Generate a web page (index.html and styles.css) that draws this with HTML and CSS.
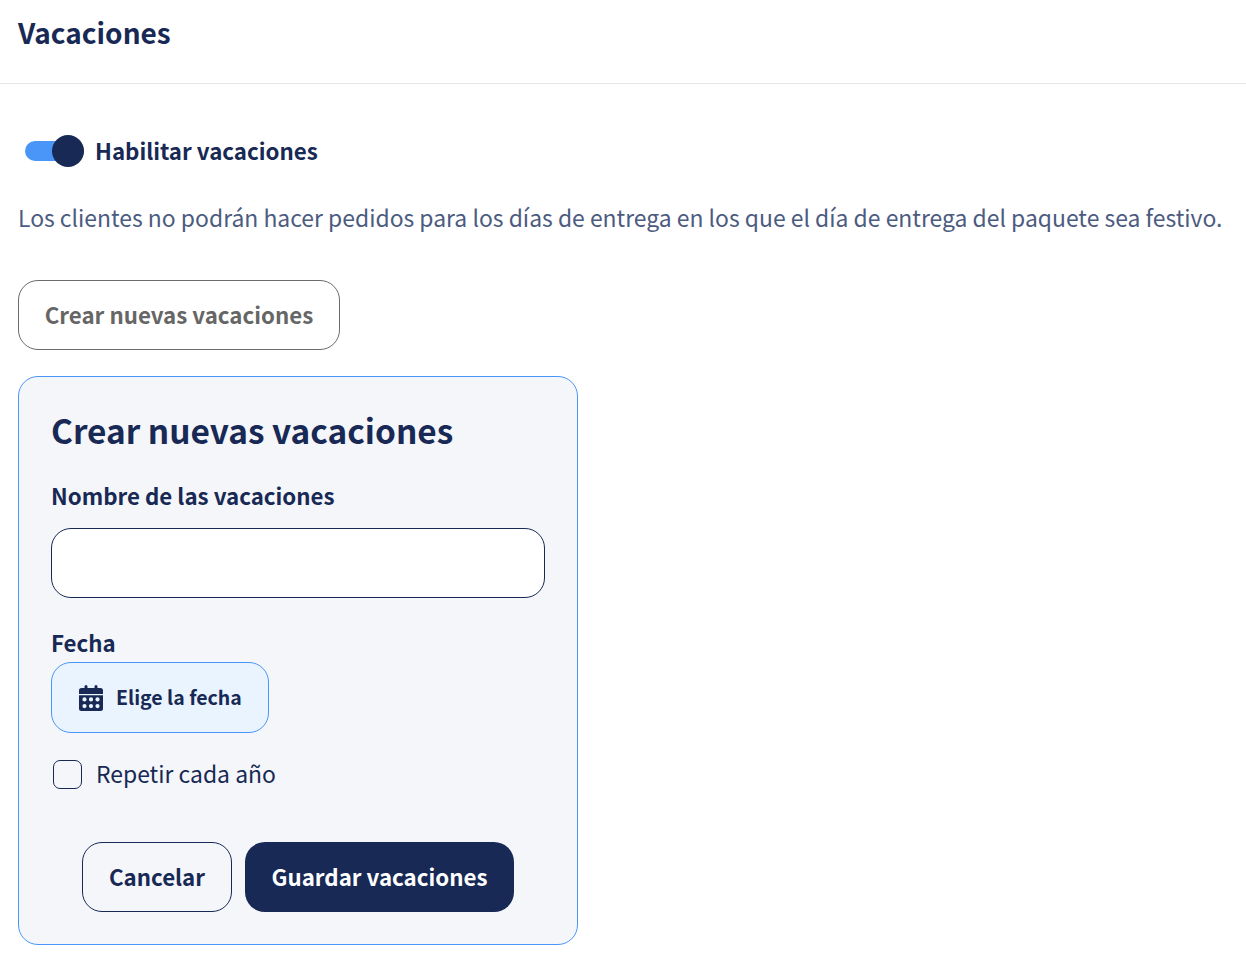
FILE: index.html
```html
<!doctype html>
<html lang="es">
  <head>
    <meta charset="UTF-8" />
    <meta name="viewport" content="width=device-width, initial-scale=1.0" />
    <title>Vacaciones</title>
    <link rel="stylesheet" href="styles.css">
  </head>
  <body>
    <header class="page-header">
      <h1>Vacaciones</h1>
    </header>

    <main class="content">
      <label class="toggle-row">
        <span class="toggle"><span class="toggle-knob"></span></span>
        <span class="toggle-label">Habilitar vacaciones</span>
      </label>

      <p class="description">Los clientes no podrán hacer pedidos para los días de entrega en los que el día de entrega del paquete sea festivo.</p>

      <button class="btn btn-disabled" type="button">Crear nuevas vacaciones</button>

      <form class="holiday-card">
        <h2>Crear nuevas vacaciones</h2>

        <label class="field-label" for="holiday-name">Nombre de las vacaciones</label>
        <input class="text-input" id="holiday-name" type="text">

        <div class="field-label date-label">Fecha</div>
        <button class="date-btn" type="button">
          <svg class="calendar-icon" viewBox="0 0 24 26" aria-hidden="true">
            <path d="M5.500 1.500a1.500 1.500 0 0 1 3 0V3h7V1.500a1.500 1.500 0 0 1 3 0V3h3A2.500 2.500 0 0 1 24 5.500V9H0V5.500A2.500 2.500 0 0 1 2.500 3h3z"/>
            <path fill-rule="evenodd" d="M0 10.200h24v13.300a2.500 2.500 0 0 1-2.500 2.500h-19A2.500 2.500 0 0 1 0 23.500zM5.500 12.300a2.100 2.100 0 1 0 0 4.200 2.100 2.100 0 0 0 0-4.200zm6.500 0a2.100 2.100 0 1 0 0 4.200 2.100 2.100 0 0 0 0-4.200zm6.500 0a2.100 2.100 0 1 0 0 4.200 2.100 2.100 0 0 0 0-4.200zM5.500 19a2.100 2.100 0 1 0 0 4.200 2.100 2.100 0 0 0 0-4.200zm6.500 0a2.100 2.100 0 1 0 0 4.200 2.100 2.100 0 0 0 0-4.200zm6.500 0a2.100 2.100 0 1 0 0 4.200 2.100 2.100 0 0 0 0-4.200z"/>
          </svg>
          <span class="date-text">Elige la fecha</span>
        </button>

        <label class="check-row">
          <input class="checkbox" type="checkbox">
          <span class="check-text">Repetir cada año</span>
        </label>

        <div class="card-actions">
          <button class="btn btn-outline" type="button">Cancelar</button>
          <button class="btn btn-primary" type="button">Guardar vacaciones</button>
        </div>
      </form>
    </main>
  </body>
</html>
```

FILE: styles.css
```css
body {
  margin: 0;
  background: #fff;
  color: #172954;
  font-family: "Noto Sans CJK SC", "Noto Sans", sans-serif;
}

.page-header {
  height: 83px;
  border-bottom: 1px solid #e4e6e9;
  padding: 0 18px;
  box-sizing: content-box;
}

.page-header h1 {
  margin: 0;
  padding-top: 13px;
  font-size: 28px;
  line-height: 38px;
  font-weight: 600;
}

.content {
  padding: 0 18px;
}

.toggle-row {
  display: flex;
  align-items: center;
  gap: 11px;
  margin-top: 51px;
  padding-left: 7px;
  height: 32px;
}

.toggle {
  display: flex;
  align-items: center;
  justify-content: flex-end;
  width: 59px;
  height: 20px;
  border-radius: 10px;
  background: #4a96f8;
}

.toggle-knob {
  width: 32px;
  height: 32px;
  border-radius: 50%;
  background: #172954;
}

.toggle-label {
  margin-bottom: 2px;
  font-size: 22.3px;
  font-weight: 600;
}

.description {
  margin: 33px 0 0;
  color: #4c5b80;
  font-size: 22.92px;
  line-height: 34px;
  white-space: nowrap;
}

.btn {
  height: 70px;
  padding: 0 0 2px;
  border-radius: 20px;
  font-family: inherit;
  font-size: 22.3px;
  font-weight: 600;
  background: transparent;
  box-sizing: border-box;
}

.btn-disabled {
  display: block;
  width: 322px;
  margin-top: 46px;
  border: 1px solid #6b6b6b;
  color: #666;
}

.holiday-card {
  width: 560px;
  height: 569px;
  box-sizing: border-box;
  margin-top: 26px;
  padding: 0 32px;
  background: #f4f6fa;
  border: 1px solid #4a96f8;
  border-radius: 20px;
}

.holiday-card h2 {
  margin: 0;
  padding-top: 29px;
  font-size: 33.4px;
  line-height: 48px;
  font-weight: 600;
}

.field-label {
  display: block;
  font-size: 22.3px;
  line-height: 32px;
  font-weight: 600;
}

.holiday-card .field-label {
  margin-top: 25px;
}

.text-input {
  display: block;
  width: 494px;
  height: 70px;
  box-sizing: border-box;
  margin-top: 17px;
  background: #fff;
  border: 1px solid #172954;
  border-radius: 20px;
}

.holiday-card .date-label {
  margin-top: 28px;
}

.date-btn {
  display: flex;
  align-items: center;
  gap: 13px;
  width: 218px;
  height: 71px;
  box-sizing: border-box;
  margin-top: 4px;
  padding: 0 27px;
  background: #e9f4ff;
  border: 1px solid #4a96f8;
  border-radius: 20px;
  color: #172954;
  font-family: inherit;
  font-size: 19.5px;
  font-weight: 600;
  white-space: nowrap;
}

.date-text {
  margin-bottom: 2px;
}

.calendar-icon {
  width: 24px;
  height: 26px;
  fill: #172954;
  flex: none;
}

.check-row {
  display: flex;
  align-items: flex-start;
  gap: 14px;
  margin-top: 27px;
  padding-left: 2px;
  font-size: 22.92px;
}

.check-text {
  height: 31px;
  line-height: 27px;
}

.checkbox {
  appearance: none;
  width: 29px;
  height: 29px;
  margin: 0;
  background: transparent;
  border: 1px solid #172954;
  border-radius: 7px;
}

.card-actions {
  display: flex;
  justify-content: flex-end;
  gap: 13px;
  margin-top: 51px;
  padding-right: 31px;
}

.btn-outline {
  width: 150px;
  border: 1px solid #172954;
  color: #172954;
}

.btn-primary {
  width: 269px;
  border: 0;
  background: #172954;
  color: #fff;
}
```
